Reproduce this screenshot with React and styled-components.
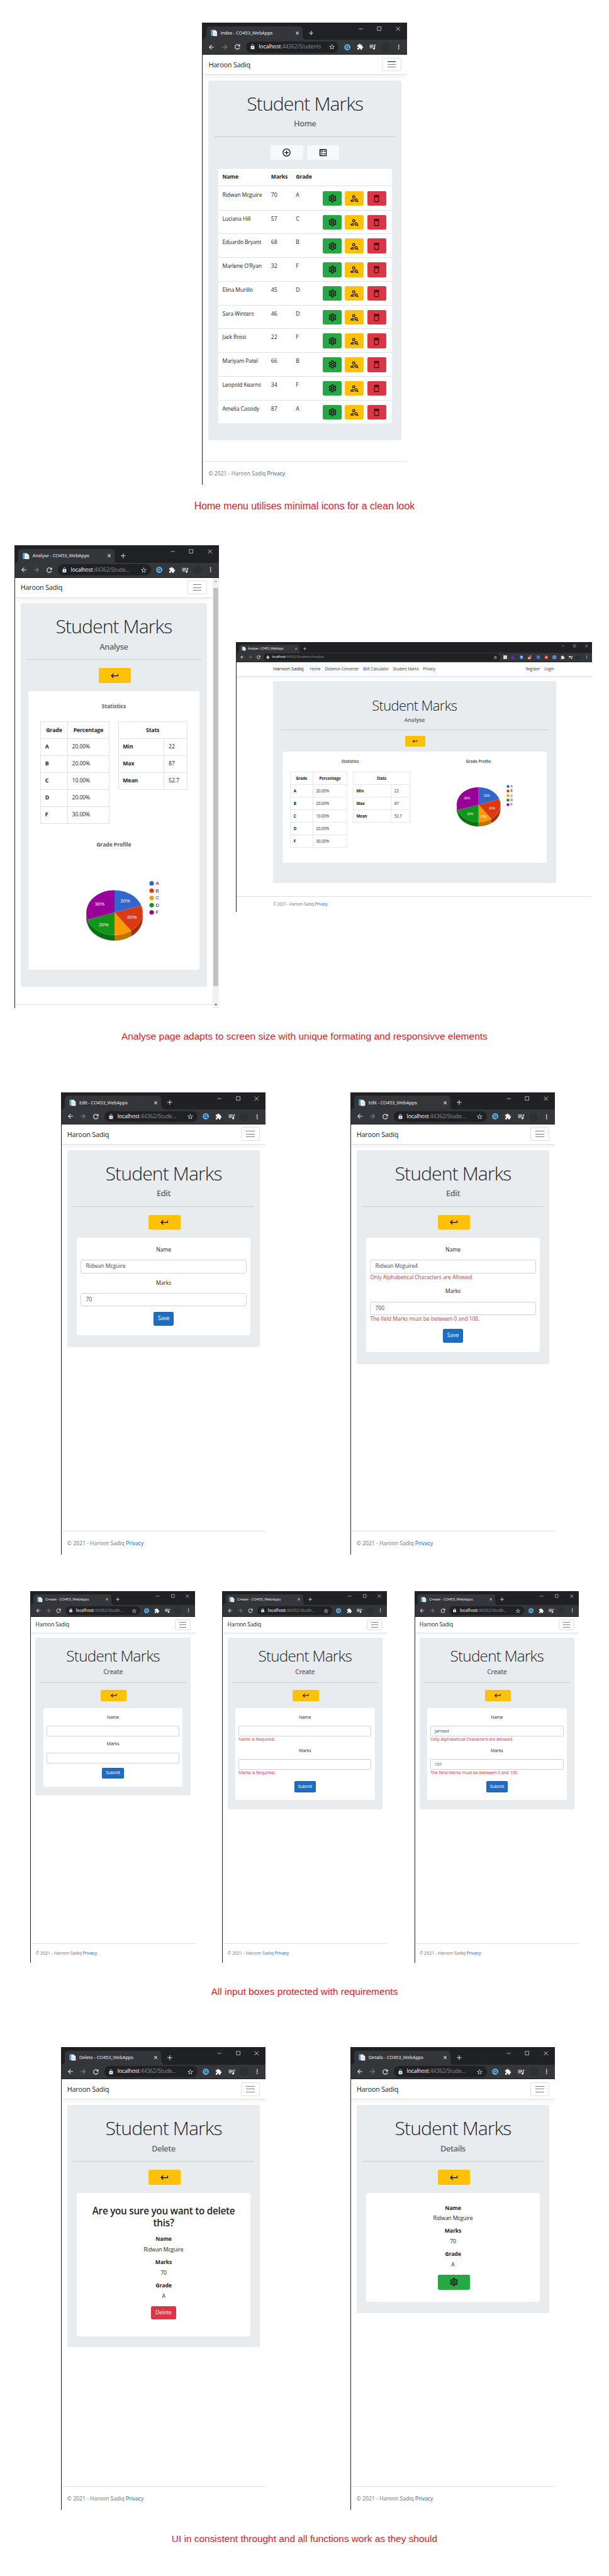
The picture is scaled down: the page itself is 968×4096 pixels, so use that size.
import React from "react";
import styled, { createGlobalStyle, css } from "styled-components";
import {
  MdArrowBack,
  MdArrowForward,
  MdRefresh,
  MdLock,
  MdStarBorder,
  MdExtension,
  MdQueueMusic,
  MdMoreVert,
  MdAddCircleOutline,
  MdOutlineBallot,
  MdOutlineSettings,
  MdOutlinePersonSearch,
  MdDeleteOutline,
  MdKeyboardReturn,
} from "react-icons/md";

const GlobalStyle = createGlobalStyle`
  * { box-sizing: border-box; }
  html, body { margin: 0; background: #fff; overflow: hidden; }
  h1, h3, h4, p, dl, dt, dd { margin: 0; }
`;

const COLORS = {
  light: "#f8f9fa",
  green: "#28a745",
  yellow: "#ffc107",
  red: "#dc3545",
  line: "#dee2e6",
};

/* ---------- page ---------- */

const Page = styled.main`
  zoom: 0.6397;
  width: 1513px;
  height: 6402px;
  overflow: hidden;
  display: flex;
  flex-direction: column;
  background: #fff;
`;

const ShotRow = styled.section`
  display: flex;
  flex: none;
  align-items: flex-start;
  height: ${(p) => p.$height}px;
  margin-top: ${(p) => p.$top}px;
  padding-left: ${(p) => p.$left}px;
  gap: ${(p) => p.$gap || 0}px;
`;

const WideSlot = styled.div`
  padding-top: 240px;
`;

const Caption = styled.p`
  flex: none;
  margin-top: ${(p) => p.$top}px;
  height: 40px;
  line-height: 40px;
  text-align: center;
  white-space: nowrap;
  font-family: "Liberation Sans", Arial, sans-serif;
  font-size: ${(p) => p.$size || 24.3}px;
  color: #e01b24;
`;

/* ---------- browser frame ---------- */

const Frame = styled.article`
  zoom: ${(p) => p.$zoom};
  width: ${(p) => p.$width}px;
  height: ${(p) => p.$height}px;
  flex: none;
  display: flex;
  flex-direction: column;
  overflow: hidden;
  border-left: 1px solid #202124;
  font-family: "Open Sans", "Segoe UI", sans-serif;
  font-size: ${(p) => (p.$wide ? 15.5 : 13.6)}px;
  line-height: ${(p) => (p.$wide ? 24 : 21)}px;
  letter-spacing: -0.014em;
  color: #212529;
  background: #fff;
`;

const TabStrip = styled.header`
  flex: none;
  height: 43px;
  padding: 9px 0 0 8px;
  display: flex;
  background: #202124;
  color: #e8eaed;
`;

const Tab = styled.div`
  position: relative;
  width: 240px;
  height: 34px;
  padding: 0 10px 0 11px;
  display: flex;
  align-items: center;
  border-radius: 8px 8px 0 0;
  background: #35363a;
  font-size: 11.7px;
  color: #f1f3f4;
  &::before,
  &::after {
    content: "";
    position: absolute;
    bottom: 0;
    width: 8px;
    height: 8px;
  }
  &::before {
    left: -8px;
    background: radial-gradient(circle at 0 0, transparent 7.5px, #35363a 8px);
  }
  &::after {
    right: -8px;
    background: radial-gradient(circle at 100% 0, transparent 7.5px, #35363a 8px);
  }
`;

const TabTitle = styled.span`
  flex: 1;
  margin-left: 8px;
  white-space: nowrap;
`;

const NewTab = styled.div`
  width: 42px;
  height: 34px;
  display: flex;
  align-items: center;
  justify-content: center;
`;

const WindowControls = styled.div`
  margin: -9px 0 0 auto;
  height: 31px;
  display: flex;
  svg {
    width: 46px;
    height: 31px;
  }
`;

const Toolbar = styled.div`
  flex: none;
  height: 37px;
  padding: 0 5px 0 6px;
  display: flex;
  align-items: center;
  background: #35363a;
  border-bottom: 1px solid #202124;
`;

const ToolSlot = styled.div`
  flex: none;
  width: ${(p) => p.$width || 32}px;
  display: flex;
  justify-content: center;
  color: ${(p) => (p.$dim ? "#85878a" : "#f1f3f4")};
`;

const AddressPill = styled.div`
  flex: 1;
  height: 28px;
  margin-left: 5px;
  margin-right: 5px;
  padding: 0 9px;
  display: flex;
  align-items: center;
  border-radius: 14px;
  background: #202124;
  color: #8b8e92;
  font-size: 13.5px;
  white-space: nowrap;
  svg { color: #dfe1e5; }
`;

const Url = styled.span`
  flex: 1;
  margin-left: 9px;
  b {
    font-weight: 400;
    color: #fff;
  }
`;

/* ---------- site ---------- */

const Viewport = styled.div`
  flex: 1;
  min-height: 0;
  display: flex;
`;

const Site = styled.div`
  flex: 1;
  min-width: 0;
  display: flex;
  flex-direction: column;
`;

const Navbar = styled.nav`
  flex: none;
  height: ${(p) => (p.$wide ? 58 : 50)}px;
  padding: 0 ${(p) => (p.$wide ? 143 : 14)}px;
  display: flex;
  align-items: center;
  border-bottom: 1px solid #dfe1e4;
  box-shadow: 0 4px 11px rgba(0, 0, 0, 0.06);
`;

const Brand = styled.span`
  font-size: ${(p) => (p.$wide ? 19.8 : 17)}px;
  letter-spacing: -0.02em;
  white-space: nowrap;
  margin-right: ${(p) => (p.$wide ? 25 : 0)}px;
`;

const NavLink = styled.a`
  margin-right: 16.5px;
  white-space: nowrap;
  color: #343a40;
  &:last-child { margin-right: 8px; }
`;

const NavSpacer = styled.span`
  flex: 1;
`;

const Toggler = styled.button`
  margin-left: auto;
  width: 48px;
  height: 34px;
  padding: 0;
  display: flex;
  flex-direction: column;
  align-items: center;
  justify-content: center;
  gap: 5.3px;
  border: 1px solid #dddfe1;
  border-radius: 4px;
  background: #fff;
`;

const TogglerBar = styled.span`
  width: 21px;
  height: 1.7px;
  background: #808080;
`;

const Jumbotron = styled.section`
  flex: none;
  margin: ${(p) => (p.$wide ? "16px 143px 0" : "14px 14px 0")};
  padding: ${(p) => (p.$wide ? "66px 32px 80px" : `28px 14px ${p.$bottom}px`)};
  border-radius: 4px;
  background: #e9ecef;
  text-align: center;
`;

const Title = styled.h1`
  font-weight: 300;
  font-size: ${(p) => (p.$wide ? 54.6 : 47.2)}px;
  line-height: ${(p) => (p.$wide ? 67 : 59)}px;
  letter-spacing: ${(p) => (p.$wide ? -0.028 : -0.031)}em;
  white-space: nowrap;
`;

const Subtitle = styled.h4`
  margin-top: 7px;
  font-weight: 600;
  font-size: ${(p) => (p.$wide ? 23 : 20)}px;
  line-height: ${(p) => (p.$wide ? 29 : 25)}px;
  letter-spacing: -0.03em;
  color: #666;
`;

const Rule = styled.hr`
  height: 1px;
  margin: ${(p) => (p.$wide ? "24px 0 24px" : "20px 0 21px")};
  border: 0;
  background: #cdd0d3;
`;

const ButtonBar = styled.div`
  display: flex;
  justify-content: center;
  gap: 10px;
  padding-left: ${(p) => (p.$shift ? 5 : 0)}px;
`;

const IconButton = styled.button`
  width: ${(p) => p.$width || 80}px;
  height: ${(p) => (p.$wide ? 40.5 : 36.7)}px;
  padding: 0;
  display: inline-flex;
  align-items: center;
  justify-content: center;
  border: 0;
  border-radius: 3.5px;
  background: ${(p) => COLORS[p.$tone]};
  color: #000;
  font-size: 23.5px;
`;

const Card = styled.div`
  margin: ${(p) => (p.$wide ? "20.5px 5.3px 0" : p.$tight ? "20px 5px 0" : "20px 10px 0")};
  height: ${(p) => p.$height}px;
  padding: ${(p) => p.$pad};
  border-radius: 5px;
  background: #fff;
`;

/* ---------- marks table ---------- */

const MarksTable = styled.div`
  margin: 20px 10px 0;
  border-top: 1px solid ${COLORS.line};
  border-radius: 4px;
  background: #fff;
  text-align: left;
`;

const MarksRow = styled.div`
  display: grid;
  grid-template-columns: 121px 61.6px 62px 1fr;
  height: 59px;
  padding: 11px 14px 0 10.5px;
  border-top: 1px solid ${COLORS.line};
  white-space: nowrap;
  ${(p) =>
    p.$head &&
    css`
      height: 43.5px;
      border-top: 0;
      border-bottom: 2px solid ${COLORS.line};
      font-weight: 700;
    `}
  ${(p) => p.$first && css`border-top-color: transparent;`}
`;

const RowActions = styled.div`
  display: flex;
  justify-content: flex-end;
  gap: 8.2px;
`;

/* ---------- statistics ---------- */

const StatsLayout = styled.div`
  display: flex;
  flex-direction: ${(p) => (p.$wide ? "row" : "column")};
`;

const StatsColumn = styled.div`
  width: ${(p) => (p.$wide ? "480px" : "auto")};
  padding: 0 ${(p) => (p.$wide ? 0 : 30)}px;
`;

const ChartColumn = styled.div`
  flex: 1;
  margin-top: ${(p) => (p.$wide ? 0 : 42)}px;
`;

const Heading = styled.div`
  font-weight: 700;
  color: #5f6265;
`;

const TablePair = styled.div`
  display: flex;
  align-items: flex-start;
  gap: 21px;
  margin-top: 27px;
  text-align: left;
`;

const StatTable = styled.table`
  flex: 1;
  table-layout: fixed;
  width: 0;
  border-collapse: collapse;
  th, td {
    height: ${(p) => (p.$wide ? 49.9 : 42.1)}px;
    padding: 0 ${(p) => (p.$wide ? 12 : 10.5)}px;
    border: 1px solid ${(p) => (p.$wide ? "#e6e9ec" : COLORS.line)};
    font-weight: 400;
    white-space: nowrap;
  }
  th:first-child {
    width: ${(p) => p.$first}px;
    font-weight: 700;
  }
  thead th {
    font-weight: 700;
    text-align: center;
    border-bottom-width: 2px;
  }
`;

/* ---------- forms and details ---------- */

const Label = styled.div`
  margin-bottom: 14.5px;
`;

const Field = styled.div`
  margin-bottom: 14px;
  text-align: left;
`;

const Input = styled.div`
  height: 33px;
  padding: 0 11px;
  line-height: 31px;
  border: 1px solid #ced4da;
  border-radius: 4px;
  color: #495057;
`;

const ErrorText = styled.div`
  color: ${COLORS.red};
  white-space: nowrap;
`;

const TextButton = styled.button`
  width: ${(p) => p.$width}px;
  height: 33.5px;
  padding: 0;
  border: 1px solid ${(p) => (p.$danger ? COLORS.red : "#1861ac")};
  border-radius: 3.5px;
  background: ${(p) => (p.$danger ? COLORS.red : "#1b6ec2")};
  color: #fff;
  font: inherit;
  letter-spacing: inherit;
`;

const Question = styled.h3`
  margin-bottom: 16px;
  font-weight: 600;
  font-size: 23.9px;
  line-height: 29.3px;
  letter-spacing: -0.017em;
`;

const Details = styled.dl`
  margin-bottom: 13.5px;
  dt {
    font-weight: 700;
    margin-bottom: 5px;
  }
  dd + dt { margin-top: 10.8px; }
`;

/* ---------- footer and scrollbar ---------- */

const Footer = styled.footer`
  flex: none;
  height: ${(p) => p.$height}px;
  margin-top: auto;
  padding: 0 ${(p) => (p.$wide ? 143 : 14)}px;
  line-height: ${(p) => (p.$wide ? 62 : 60)}px;
  letter-spacing: -0.005em;
  border-top: 1px solid ${COLORS.line};
  color: #6c757d;
  white-space: nowrap;
  a { color: #0366d6; }
`;

const Scrollbar = styled.div`
  flex: none;
  width: 16px;
  display: flex;
  flex-direction: column;
  align-items: center;
  justify-content: space-between;
  background: #f1f1f1;
`;

const ScrollThumb = styled.div`
  width: 13px;
  height: 989px;
  margin-bottom: 30px;
  background: #c1c1c1;
`;

/* ---------- drawings ---------- */

const PageIcon = () => (
  <svg width="17" height="17" viewBox="0 0 17 17">
    <path d="M1 1h11v14H1z" fill="#e8eef4" />
    <path d="M1 1h4v14H1z" fill="#4f9fd8" />
    <path d="M6 3h7l3 3v10H6z" fill="#f7f9fb" stroke="#b4c0cc" strokeWidth=".6" />
    <path d="M8 8h6M8 10h6M8 12h6" stroke="#a8b6c4" strokeWidth=".8" />
  </svg>
);

const Cross = ({ size = 8, width = 1.6 }) => (
  <svg width={size} height={size} viewBox="0 0 8 8">
    <path d="M.5.5l7 7M7.5.5l-7 7" stroke="#e8eaed" strokeWidth={width} />
  </svg>
);

const Plus = () => (
  <svg width="12" height="12" viewBox="0 0 12 12">
    <path d="M6 0v12M0 6h12" stroke="#dfe1e5" strokeWidth="1.6" />
  </svg>
);

const Controls = () => (
  <WindowControls>
    <svg viewBox="0 0 46 31"><path d="M18 15.5h10" stroke="#fff" /></svg>
    <svg viewBox="0 0 46 31"><path d="M18.5 10.5h9v9h-9z" fill="none" stroke="#fff" /></svg>
    <svg viewBox="0 0 46 31"><path d="M18 10.5l10 10M28 10.5l-10 10" stroke="#fff" strokeWidth="1.2" /></svg>
  </WindowControls>
);

const SearchBadge = () => (
  <svg width="16" height="16" viewBox="0 0 16 16">
    <circle cx="8" cy="8" r="7.7" fill="#5db5ee" />
    <circle cx="7.8" cy="7.6" r="3.2" fill="none" stroke="#1c3a52" strokeWidth="1.7" />
    <path d="M10 10l2.6 2.4" stroke="#1c3a52" strokeWidth="1.8" />
  </svg>
);

const Avatar = () => (
  <svg width="22" height="22" viewBox="0 0 22 22">
    <circle cx="11" cy="11" r="10.8" fill="#2a2f30" />
    <path d="M5 5l3 3M10 3l1 4M15 5l-2 4M4 11l4 1M14 11l4-2M7 17l3-4M13 18l-1-4M17 14l-3-1" stroke="#1b4a52" strokeWidth="1" />
  </svg>
);

const GreyBadge = () => (
  <svg width="16" height="16" viewBox="0 0 16 16">
    <path d="M0 0h16v16H0z" fill="#c4c7ca" />
    <path d="M5 13V3l6 4-4 1 4 5" fill="none" stroke="#f4f4f4" strokeWidth="1.6" />
  </svg>
);

const Moon = () => (
  <svg width="16" height="16" viewBox="0 0 16 16">
    <path d="M6 0a8.5 8.5 0 1 0 10 11A8 8 0 0 1 6 0z" fill="#6a2be0" />
  </svg>
);

const Book = () => (
  <svg width="14" height="16" viewBox="0 0 14 16">
    <path d="M0 0h14v16H0z" fill="#2d62b8" />
    <path d="M4 3h7v6H4z" fill="#dbe7fa" />
    <path d="M3 12.5h8" stroke="#dbe7fa" strokeWidth="1.5" />
  </svg>
);

const RedCards = () => (
  <svg width="16" height="16" viewBox="0 0 16 16">
    <path d="M5 0h11v9H5z" fill="#e03a3a" />
    <path d="M0 7h11v9H0z" fill="#f6f6f6" />
    <path d="M0 9h11v3H0z" fill="#d42c2c" />
  </svg>
);

const Globe = () => (
  <svg width="16" height="16" viewBox="0 0 16 16">
    <circle cx="8" cy="8" r="8" fill="#2a7de1" />
    <path d="M4 2a7.5 7.5 0 0 0 7 13.2A9 9 0 0 1 4 2z" fill="#163f9c" />
    <circle cx="9" cy="7" r="3" fill="#e2483d" />
  </svg>
);

const StopHand = () => (
  <svg width="16" height="16" viewBox="0 0 16 16">
    <path d="M5 0h6l5 5v6l-5 5H5l-5-5V5z" fill="#e0241b" />
    <path d="M5.5 4v6l2 3h2.5l1.5-4V5h-1.5v3H9V3H7v5h-.5V4z" fill="#fff" />
  </svg>
);

const BADGES = [GreyBadge, Moon, Book, RedCards, Globe, StopHand];

const SLICES = [
  { name: "A", share: 20, color: "#3366cc", side: "#264d99" },
  { name: "B", share: 20, color: "#dc3912", side: "#a52b0e" },
  { name: "C", share: 10, color: "#ff9900", side: "#bf7300" },
  { name: "D", share: 20, color: "#109618", side: "#0c7112" },
  { name: "F", share: 30, color: "#990099", side: "#730073" },
];

const ChartSvg = styled.svg`
  display: block;
  font-family: "Liberation Sans", Arial, sans-serif;
  font-size: 12px;
  letter-spacing: 0;
`;

function Pie({ width, height, cx, cy, rx, ry, depth, legendX, legendY, smallest }) {
  let sum = 0;
  const parts = SLICES.map((s) => {
    const from = sum / 100;
    sum += s.share;
    return { ...s, from, to: sum / 100 };
  });
  const at = (t, k = 1) => [
    cx + rx * k * Math.sin(2 * Math.PI * t),
    cy - ry * k * Math.cos(2 * Math.PI * t),
  ];
  return (
    <ChartSvg width={width} height={height} viewBox={`0 0 ${width} ${height}`}>
      {parts
        .filter((s) => s.to > 0.25)
        .map((s) => {
          const a = at(Math.max(s.from, 0.25));
          const b = at(Math.min(s.to, 0.75));
          return (
            <path
              key={s.name}
              fill={s.side}
              d={`M${a} A${rx} ${ry} 0 0 1 ${b} l0 ${depth} A${rx} ${ry} 0 0 0 ${a[0]} ${a[1] + depth}z`}
            />
          );
        })}
      {parts.map((s) => (
        <path
          key={s.name}
          fill={s.color}
          d={`M${cx} ${cy} L${at(s.from)} A${rx} ${ry} 0 0 1 ${at(s.to)}z`}
        />
      ))}
      {parts
        .filter((s) => s.share >= smallest)
        .map((s) => {
          const [x, y] = at((s.from + s.to) / 2, s.share > 10 ? 0.65 : 0.71);
          return (
            <text key={s.name} x={x} y={y + 4.2} fill="#fff" textAnchor="middle">
              {s.share}%
            </text>
          );
        })}
      {parts.map((s, i) => (
        <g key={s.name}>
          <circle cx={legendX} cy={legendY + i * 18} r="5.6" fill={s.color} />
          <text x={legendX + 10} y={legendY + i * 18 + 4.2} fill="#222">
            {s.name}
          </text>
        </g>
      ))}
    </ChartSvg>
  );
}

/* ---------- composed parts ---------- */

function Browser({ page, path = "/Stude...", zoom = 1, wide, scroll, children }) {
  return (
    <Frame $zoom={zoom} $wide={wide} $width={wide ? 1408 : 509} $height={wide ? 1067 : 1150}>
      <TabStrip>
        <Tab>
          <PageIcon />
          <TabTitle>{page} - CO453_WebApps</TabTitle>
          <Cross />
        </Tab>
        <NewTab><Plus /></NewTab>
        <Controls />
      </TabStrip>
      <Toolbar>
        <ToolSlot><MdArrowBack size={19} /></ToolSlot>
        <ToolSlot $dim><MdArrowForward size={19} /></ToolSlot>
        <ToolSlot><MdRefresh size={20} /></ToolSlot>
        <AddressPill>
          <MdLock size={14} />
          <Url><b>localhost</b>:44362{path}</Url>
          <MdStarBorder size={17} />
        </AddressPill>
        {wide && BADGES.map((Badge, i) => <ToolSlot key={i} $width={32.5}><Badge /></ToolSlot>)}
        <ToolSlot><SearchBadge /></ToolSlot>
        <ToolSlot><MdExtension size={17} /></ToolSlot>
        <ToolSlot><MdQueueMusic size={20} /></ToolSlot>
        <ToolSlot><Avatar /></ToolSlot>
        <ToolSlot><MdMoreVert size={18} /></ToolSlot>
      </Toolbar>
      <Viewport>
        <Site>
          <Navbar $wide={wide}>
            <Brand $wide={wide}>Haroon Sadiq</Brand>
            {wide ? (
              <>
                <NavLink>Home</NavLink>
                <NavLink>Distance Converter</NavLink>
                <NavLink>BMI Calculator</NavLink>
                <NavLink>Student Marks</NavLink>
                <NavLink>Privacy</NavLink>
                <NavSpacer />
                <NavLink>Register</NavLink>
                <NavLink>Login</NavLink>
              </>
            ) : (
              <Toggler><TogglerBar /><TogglerBar /><TogglerBar /></Toggler>
            )}
          </Navbar>
          {children}
          {scroll ? (
            <Footer $height={10} />
          ) : (
            <Footer $wide={wide} $height={wide ? 62 : 60}>
              © 2021 - Haroon Sadiq <a>Privacy</a>
            </Footer>
          )}
        </Site>
        {scroll && (
          <Scrollbar>
            <svg width="16" height="17" viewBox="0 0 16 17"><path d="M4.5 10l3.5-4 3.5 4z" fill="#a3a3a3" /></svg>
            <ScrollThumb />
            <svg width="16" height="17" viewBox="0 0 16 17"><path d="M4.5 7l3.5 4 3.5-4z" fill="#505050" /></svg>
          </Scrollbar>
        )}
      </Viewport>
    </Frame>
  );
}

function Head({ name, wide }) {
  return (
    <>
      <Title $wide={wide}>Student Marks</Title>
      <Subtitle $wide={wide}>{name}</Subtitle>
      <Rule $wide={wide} />
    </>
  );
}

function BackBar({ wide }) {
  return (
    <ButtonBar $shift>
      <IconButton $tone="yellow" $wide={wide}><MdKeyboardReturn /></IconButton>
    </ButtonBar>
  );
}

const STUDENTS = [
  ["Ridwan Mcguire", 70, "A"],
  ["Luciana Hill", 57, "C"],
  ["Eduardo Bryant", 68, "B"],
  ["Marlene O'Ryan", 32, "F"],
  ["Elina Murillo", 45, "D"],
  ["Sara Winters", 46, "D"],
  ["Jack Rossi", 22, "F"],
  ["Mariyam Patel", 66, "B"],
  ["Leopold Kearns", 34, "F"],
  ["Amelia Cassidy", 87, "A"],
];

function HomePage() {
  return (
    <Browser page="Index" path="/Students">
      <Jumbotron $bottom={41.5}>
        <Head name="Home" />
        <ButtonBar>
          <IconButton $tone="light"><MdAddCircleOutline /></IconButton>
          <IconButton $tone="light"><MdOutlineBallot /></IconButton>
        </ButtonBar>
        <MarksTable>
          <MarksRow $head>
            <span>Name</span>
            <span>Marks</span>
            <span>Grade</span>
          </MarksRow>
          {STUDENTS.map(([name, marks, grade], i) => (
            <MarksRow key={name} $first={i === 0}>
              <span>{name}</span>
              <span>{marks}</span>
              <span>{grade}</span>
              <RowActions>
                <IconButton $tone="green" $width={47}><MdOutlineSettings /></IconButton>
                <IconButton $tone="yellow" $width={47}><MdOutlinePersonSearch /></IconButton>
                <IconButton $tone="red" $width={47}><MdDeleteOutline /></IconButton>
              </RowActions>
            </MarksRow>
          ))}
        </MarksTable>
      </Jumbotron>
    </Browser>
  );
}

function StatTables({ wide }) {
  return (
    <TablePair>
      <StatTable $wide={wide} $first={wide ? 89 : 67}>
        <thead>
          <tr><th>Grade</th><th>Percentage</th></tr>
        </thead>
        <tbody>
          {SLICES.map((s) => (
            <tr key={s.name}><th>{s.name}</th><td>{s.share}.00%</td></tr>
          ))}
        </tbody>
      </StatTable>
      <StatTable $wide={wide} $first={wide ? 126 : 94}>
        <colgroup><col width={wide ? 126 : 94} /><col /></colgroup>
        <thead>
          <tr><th colSpan={2}>Stats</th></tr>
        </thead>
        <tbody>
          <tr><th>Min</th><td>22</td></tr>
          <tr><th>Max</th><td>87</td></tr>
          <tr><th>Mean</th><td>52.7</td></tr>
        </tbody>
      </StatTable>
    </TablePair>
  );
}

const WIDE_PIE = {
  width: 539, height: 380, cx: 270.5, cy: 158, rx: 86.4, ry: 69.3,
  depth: 17, legendX: 387, legendY: 86, smallest: 10,
};
const NARROW_PIE = {
  width: 424, height: 298, cx: 214.2, cy: 158, rx: 70, ry: 55.8,
  depth: 13.9, legendX: 306.5, legendY: 85.5, smallest: 20,
};

function AnalysePage({ wide, zoom }) {
  return (
    <Browser
      page="Analyse"
      path={wide ? "/Students/Analyse" : "/Stude..."}
      wide={wide}
      zoom={zoom}
      scroll={!wide}
    >
      <Jumbotron $wide={wide} $bottom={43}>
        <Head name="Analyse" wide={wide} />
        <BackBar wide={wide} />
        <Card $wide={wide} $tight $height={wide ? 440 : 692.5} $pad={wide ? "29px 0 0 30px" : "28px 0 0"}>
          <StatsLayout $wide={wide}>
            <StatsColumn $wide={wide}>
              <Heading>Statistics</Heading>
              <StatTables wide={wide} />
            </StatsColumn>
            <ChartColumn $wide={wide}>
              <Heading>Grade Profile</Heading>
              <Pie {...(wide ? WIDE_PIE : NARROW_PIE)} />
            </ChartColumn>
          </StatsLayout>
        </Card>
      </Jumbotron>
    </Browser>
  );
}

function FormPage({ name, action, actionWidth, zoom, values = [], errors = [] }) {
  return (
    <Browser page={name} zoom={zoom}>
      <Jumbotron $bottom={28.5}>
        <Head name={name} />
        <BackBar />
        <Card $height={errors.length ? 285 : 243} $pad="20px 10px 0">
          {["Name", "Marks"].map((label, i) => (
            <React.Fragment key={label}>
              <Label>{label}</Label>
              <Field>
                <Input>{values[i]}</Input>
                {errors[i] && <ErrorText>{errors[i]}</ErrorText>}
              </Field>
            </React.Fragment>
          ))}
          <TextButton $width={actionWidth}>{action}</TextButton>
        </Card>
      </Jumbotron>
    </Browser>
  );
}

const RECORD = [["Name", "Ridwan Mcguire"], ["Marks", "70"], ["Grade", "A"]];

function Record() {
  return (
    <Details>
      {RECORD.map(([term, value]) => (
        <React.Fragment key={term}>
          <dt>{term}</dt>
          <dd>{value}</dd>
        </React.Fragment>
      ))}
    </Details>
  );
}

function DeletePage() {
  return (
    <Browser page="Delete">
      <Jumbotron $bottom={27.5}>
        <Head name="Delete" />
        <BackBar />
        <Card $height={356.3} $pad="31px 20px 0">
          <Question>Are you sure you want to delete this?</Question>
          <Record />
          <TextButton $width={63} $danger>Delete</TextButton>
        </Card>
      </Jumbotron>
    </Browser>
  );
}

function DetailsPage() {
  return (
    <Browser page="Details">
      <Jumbotron $bottom={27.5}>
        <Head name="Details" />
        <BackBar />
        <Card $height={271.5} $pad="28px 20px 0">
          <Record />
          <ButtonBar $shift>
            <IconButton $tone="green"><MdOutlineSettings /></IconButton>
          </ButtonBar>
        </Card>
      </Jumbotron>
    </Browser>
  );
}

const FORMAT_ERRORS = [
  "Only Alphabetical Characters are Allowed.",
  "The field Marks must be between 0 and 100.",
];
const MISSING_ERRORS = ["Name is Required.", "Marks is Required."];
const EDIT = { name: "Edit", action: "Save", actionWidth: 51 };
const CREATE = { name: "Create", action: "Submit", actionWidth: 67, zoom: 0.8035 };

export default function App() {
  return (
    <>
      <GlobalStyle />
      <Page>
        <ShotRow $top={56} $left={502.5} $height={1150}>
          <HomePage />
        </ShotRow>
        <Caption $top={32} $size={24.7}>Home menu utilises minimal icons for a clean look</Caption>
        <ShotRow $top={78} $left={35.5} $gap={42.5} $height={1150}>
          <AnalysePage />
          <WideSlot>
            <AnalysePage wide zoom={0.628} />
          </WideSlot>
        </ShotRow>
        <Caption $top={50}>
          Analyse page adapts to screen size with unique formating and responsivve elements
        </Caption>
        <ShotRow $top={119} $left={151.3} $gap={210} $height={1150}>
          <FormPage {...EDIT} values={["Ridwan Mcguire", "70"]} />
          <FormPage {...EDIT} values={["Ridwan Mcguire4", "700"]} errors={FORMAT_ERRORS} />
        </ShotRow>
        <ShotRow $top={90} $left={75.5} $gap={68} $height={925}>
          <FormPage {...CREATE} />
          <FormPage {...CREATE} errors={MISSING_ERRORS} />
          <FormPage {...CREATE} values={["James4", "101"]} errors={FORMAT_ERRORS} />
        </ShotRow>
        <Caption $top={51}>All input boxes protected with requirements</Caption>
        <ShotRow $top={118} $left={151.3} $gap={210} $height={1150}>
          <DeletePage />
          <DetailsPage />
        </ShotRow>
        <Caption $top={51} $size={24.1}>UI in consistent throught and all functions work as they should</Caption>
      </Page>
    </>
  );
}
